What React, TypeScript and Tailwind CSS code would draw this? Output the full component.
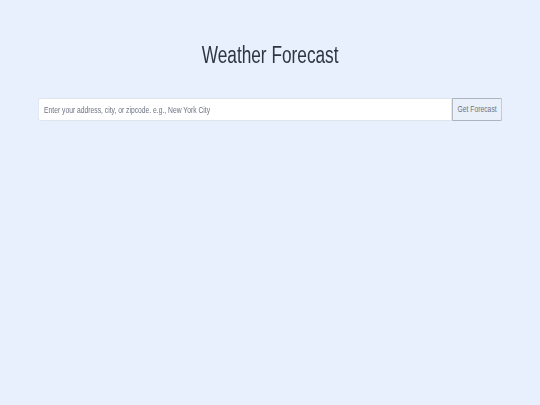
export default function App() {
  return (
    <div className="min-h-screen bg-[#e8f0fd] px-[38px] pt-[41px] font-['Liberation_Sans',Arial,sans-serif]">
      {/* the screenshot text is horizontally condensed, so the block is squeezed as a whole */}
      <div className="w-[619px] origin-left scale-x-[0.75]">
        <h1 className="text-center text-[23px] leading-[28px] text-[#2f3640]">Weather Forecast</h1>
        <div className="mt-[29px] flex h-[23px]">
          <input
            type="text"
            placeholder="Enter your address, city, or zipcode. e.g., New York City"
            className="h-full flex-1 rounded-l-[3px] border border-[#dde2ea] bg-white px-[7px] text-[9px] text-[#444] outline-none placeholder:text-[#6b7280]"
          />
          <button className="h-full w-[67px] rounded-r-[2px] border border-[#a3abb8] bg-[#eaf0f9] text-[9px] text-[#6b7280]">
            Get Forecast
          </button>
        </div>
      </div>
    </div>
  )
}
